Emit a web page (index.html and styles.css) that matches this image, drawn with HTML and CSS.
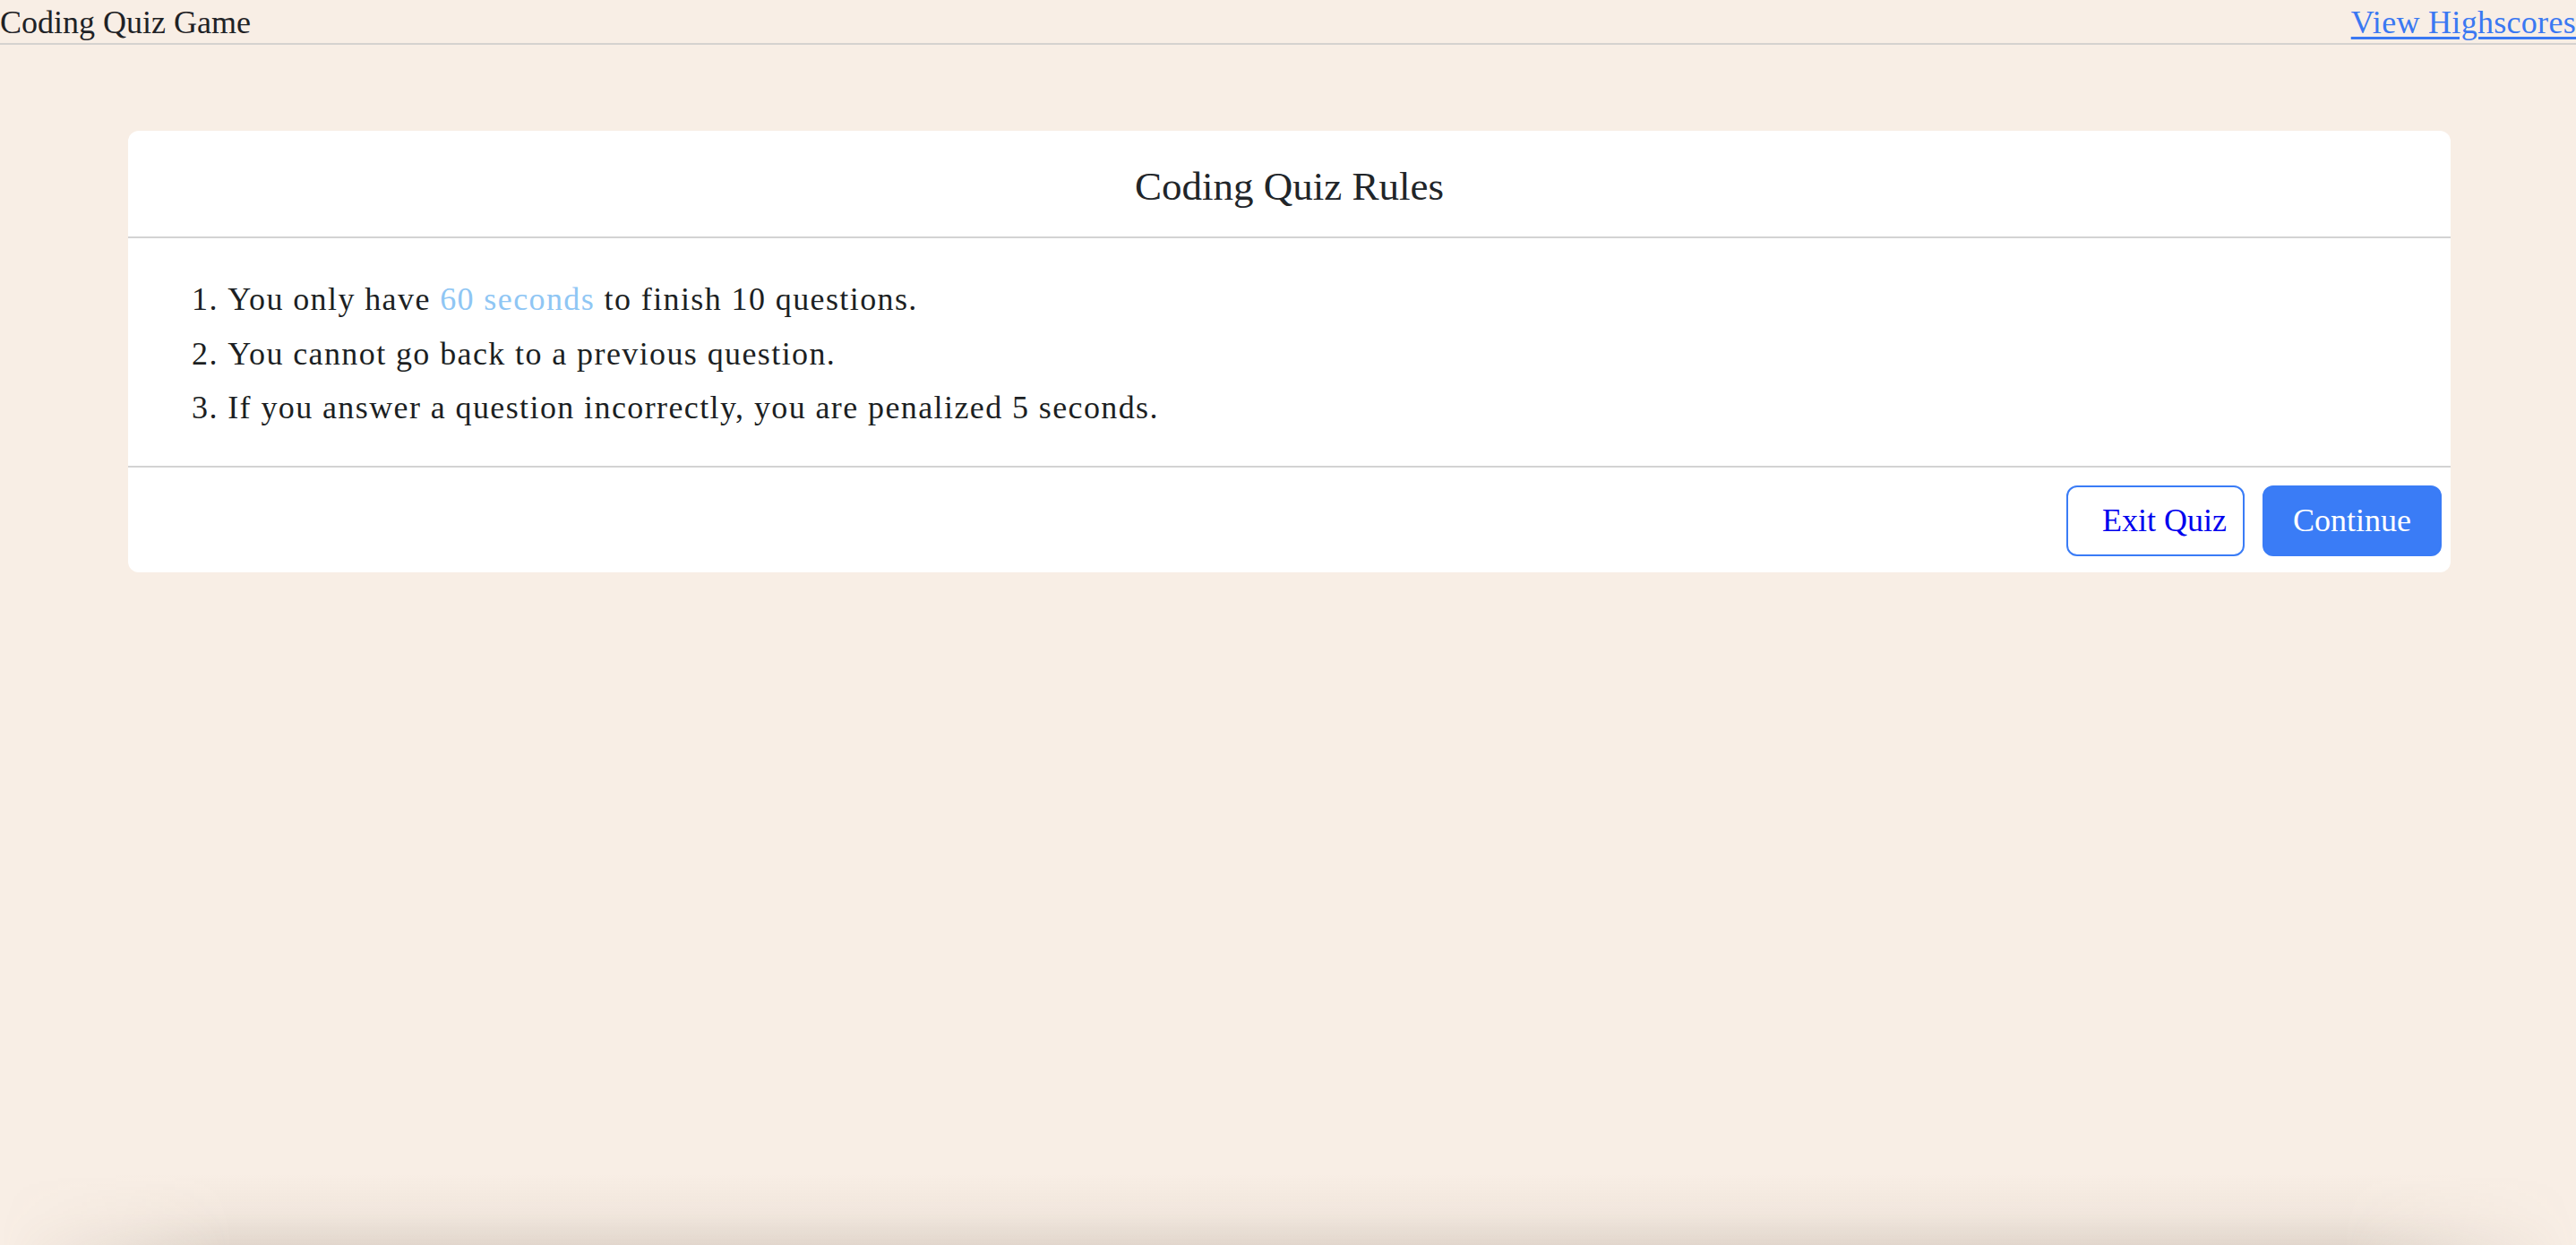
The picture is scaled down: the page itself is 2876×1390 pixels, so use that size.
FILE: index.html
```html
<!DOCTYPE html>
<html lang="en">
<head>
<meta charset="utf-8">
<title>Coding Quiz Game</title>
<link rel="stylesheet" href="styles.css">
</head>
<body>
<header class="topbar">
  <span class="brand">Coding Quiz Game</span>
  <a class="scores" href="#">View Highscores</a>
</header>
<main class="card">
  <div class="card-header">
    <h5 class="card-title">Coding Quiz Rules</h5>
  </div>
  <div class="card-body">
    <ol class="rules">
      <li>You only have <span class="hl">60 seconds</span> to finish 10 questions.</li>
      <li>You cannot go back to a previous question.</li>
      <li>If you answer a question incorrectly, you are penalized 5 seconds.</li>
    </ol>
  </div>
  <div class="card-footer">
    <button class="btn btn-outline" type="button"><a href="#">Exit Quiz</a></button>
    <button class="btn btn-primary" type="button">Continue</button>
  </div>
</main>
<div class="window-shade"></div>
</body>
</html>
```

FILE: styles.css
```css
html, body {
  margin: 0;
  padding: 0;
}
body {
  background: #f8eee5;
  font-family: "Liberation Serif", "Times New Roman", serif;
  font-size: 36px;
  color: #212529;
  min-height: 1390px;
  box-sizing: border-box;
  overflow: hidden;
}
.topbar {
  display: flex;
  justify-content: space-between;
  align-items: flex-start;
  height: 48px;
  box-sizing: content-box;
  padding-top: 0;
  line-height: 50px;
  border-bottom: 2px solid #d5d2cf;
  white-space: nowrap;
}
.brand {
  color: #1f2226;
}
.scores {
  color: #3a78f2;
  text-decoration: underline;
  text-decoration-thickness: 3px;
  text-underline-offset: 4px;
  letter-spacing: 0.3px;
}
.card {
  margin: 96px 140px 0 143px;
  background: #ffffff;
  border-radius: 12px;
}
.card-header {
  padding: 28px 0 22px;
  border-bottom: 2px solid #d3d3d3;
  text-align: center;
}
.card-title {
  margin: 0;
  font-size: 45px;
  font-weight: normal;
  line-height: 68px;
  color: #212529;
}
.card-body {
  padding: 38px 36px 34px;
  border-bottom: 2px solid #d3d3d3;
}
.rules {
  margin: 0;
  padding-left: 35px;
  list-style-position: inside;
}
.rules li {
  line-height: 60.5px;
  letter-spacing: 1.4px;
  color: #1c1f23;
}
.hl {
  color: #8fc6f4;
}
.card-footer {
  display: flex;
  justify-content: flex-end;
  gap: 20px;
  padding: 20px 10px 18px;
}
.btn {
  height: 79px;
  font-family: "Liberation Serif", "Times New Roman", serif;
  font-size: 36px;
  border-radius: 12px;
  box-sizing: border-box;
  cursor: pointer;
}
.btn-outline {
  width: 199px;
  background: #ffffff;
  border: 2px solid #3a7cf6;
  text-align: right;
  padding: 0 18px 0 0;
}
.btn-outline a {
  color: #0000ee;
  text-decoration: none;
}
.btn-primary {
  width: 200px;
  background: #3a7cf6;
  border: 2px solid #3a7cf6;
  color: #ffffff;
  padding: 0;
}
.window-shade {
  position: fixed;
  left: 0;
  right: 0;
  bottom: 0;
  height: 80px;
  pointer-events: none;
  background: linear-gradient(to bottom, rgba(120, 100, 80, 0) 0%, rgba(120, 100, 80, 0.05) 55%, rgba(110, 95, 80, 0.16) 100%);
  -webkit-mask-image: linear-gradient(to right, transparent 0, #000 260px, #000 calc(100% - 260px), transparent 100%);
  mask-image: linear-gradient(to right, transparent 0, #000 260px, #000 calc(100% - 260px), transparent 100%);
}
```
